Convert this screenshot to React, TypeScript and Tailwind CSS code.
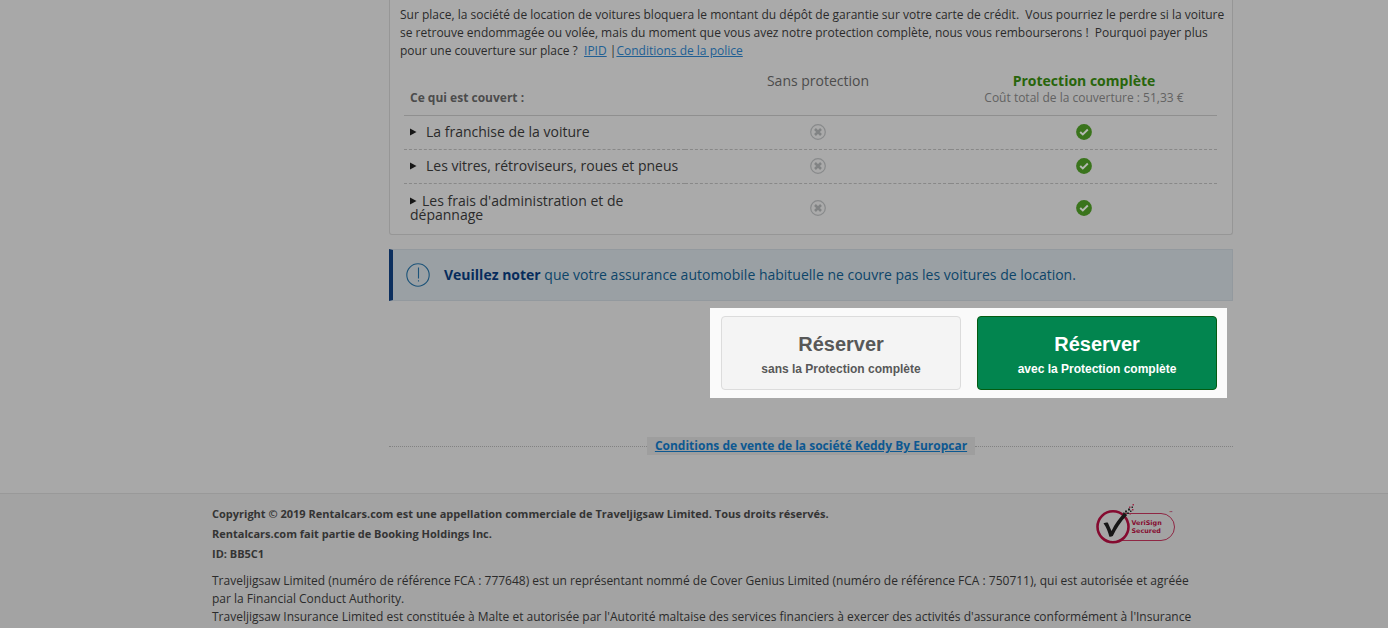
import React from "react";

const coverage = [
  { label: "La franchise de la voiture", wrap: false },
  { label: "Les vitres, rétroviseurs, roues et pneus", wrap: false },
  { label: "Les frais d'administration et de dépannage", wrap: true },
];

function NotCovered() {
  return (
    <svg className="mx-auto block" width="16" height="16" viewBox="0 0 16 16" role="img" aria-label="Non couvert">
      <circle cx="8" cy="8" r="7.3" fill="none" stroke="#888a8b" strokeWidth="1.2" />
      <path d="M5 5l6 6M11 5l-6 6" stroke="#818384" strokeWidth="2.5" />
    </svg>
  );
}

function Covered() {
  return (
    <svg className="mx-auto block" width="16" height="16" viewBox="0 0 16 16" role="img" aria-label="Couvert">
      <circle cx="8" cy="8" r="7.9" fill="#3a741c" />
      <path d="M4.200 8l2.600 2.500 5-5" fill="none" stroke="#b5b9b2" strokeWidth="1.9" />
    </svg>
  );
}

function Notice() {
  return (
    <div className="mt-[14px] flex items-center gap-[14px] border border-l-4 border-[#93999e] border-l-[#0c2f5e] bg-[#9aa0a4] py-[13px] pl-[13px] pr-4 text-sm leading-[22px] text-[#0d4569]">
      <svg className="size-6 shrink-0" viewBox="0 0 24 24" fill="none" stroke="#1c5379" aria-hidden="true">
        <circle cx="12" cy="12" r="11.2" strokeWidth="1.1" />
        <path d="M12.5 4.5v11M12.5 17.2v1.4" strokeWidth="1.1" />
      </svg>
      <p>
        <strong className="font-bold text-[#062c5c]">Veuillez noter</strong> que votre assurance automobile habituelle ne
        couvre pas les voitures de location.
      </p>
    </div>
  );
}

function VeriSign() {
  return (
    <svg className="shrink-0" width="82" height="40" viewBox="0 0 82 40" role="img" aria-label="VeriSign Secured">
      <path d="M29 9.500H66a13.500 13.500 0 0 1 0 27H27" fill="none" stroke="#8f2744" strokeWidth="1" />
      <circle cx="18" cy="22.800" r="15.500" fill="#a6a6a6" stroke="#850b30" strokeWidth="2.600" />
      <path d="M8.500 19.200c2-.9 3.800-1.100 4.400-.4l3.600 8.100c3.500-7.300 7.500-12.700 12.700-18.200l3 2.200c-6.500 6.800-10.800 13.500-14.400 21.200-1.200.7-2.300.9-3.400.7-1.300-5.300-3.100-9.700-5.900-13.600z" fill="#171717" />
      <path d="M30 6.500h2v2h-2zM33 4.500h2v2h-2zM32 8.500h2v1.500h-2zM35 6.500h1.500V8H35zM36.500 2.500H38V4h-1.500zM28 8.500h1.500V10H28z" fill="#222" />
      <path d="M34 2.500h1.500V4H34zM37 5h1.500v1.500H37zM34.500 9h1.500v1.500h-1.500zM37.500 0H39v1.500h-1.500z" fill="#9d2947" />
      <g fill="#850b30" fontFamily="'DejaVu Sans', sans-serif" fontSize="6.4" fontWeight="700">
        <text x="36.500" y="21">VeriSign</text>
        <text x="36.500" y="29">Secured</text>
        <text x="74" y="10" fontSize="4">™</text>
      </g>
    </svg>
  );
}

function BookingBar() {
  return (
    <div className="mr-[6px] mt-[7px] flex gap-4 self-end bg-[#fafafa] pb-2 pl-[11px] pr-[10px] pt-2 font-['Liberation_Sans',Arial,sans-serif] font-bold">
      <button type="button" className="flex w-60 flex-col items-center rounded-[4px] border border-[#dcdcdc] bg-[#f4f4f4] pb-2 pt-[14px] text-[#585858]">
        <span className="text-xl leading-[26px]">Réserver</span>
        <span className="text-xs leading-6">sans la Protection complète</span>
      </button>
      <button type="button" className="flex w-60 flex-col items-center rounded-[4px] border border-[#045c12] bg-[#02854f] pb-2 pt-[14px] text-white">
        <span className="text-xl leading-[26px]">Réserver</span>
        <span className="text-xs leading-6">avec la Protection complète</span>
      </button>
    </div>
  );
}

export default function App() {
  return (
    <div className="flex min-h-screen flex-col bg-[#a8a8a8] font-['Open_Sans','Noto_Sans',sans-serif] text-xs text-[#2b2b2b]">
      <main className="mx-auto flex w-full max-w-[1078px] flex-col pl-[234px]">
        <section className="rounded-b-[3px] border border-t-0 border-[#969696] bg-[#aaaaaa] pb-px pl-[10px] pt-[6px]">
          <p className="leading-[18px]">
            Sur place, la société de location de voitures bloquera le montant du dépôt de garantie sur votre carte de
            crédit.&nbsp; Vous pourriez le perdre si la voiture
            <br />
            se retrouve endommagée ou volée, mais du moment que vous avez notre protection complète, nous vous
            rembourserons !&nbsp; Pourquoi payer plus
            <br />
            pour une couverture sur place ?&nbsp;{" "}
            <a href="#ipid" className="text-[#215f94] underline">IPID</a> |
            <a href="#police" className="text-[#215f94] underline">Conditions de la police</a>
          </p>
          <div className="pl-1 pr-[15px] pt-[6px]">
            <table className="w-full table-fixed border-collapse text-sm leading-[14px]">
              <colgroup>
                <col />
                <col className="w-[266px]" />
                <col className="w-[266px]" />
              </colgroup>
              <thead>
                <tr className="h-[49px] border-b border-[#8f8f8f] align-top text-[#4c4c4c]">
                  <th scope="col" className="pl-[6px] pt-6 text-left text-xs leading-4 font-bold">
                    Ce qui est couvert :
                  </th>
                  <th scope="col" className="pt-[6px] leading-[18px] font-normal">Sans protection</th>
                  <th scope="col" className="pt-[6px] font-normal">
                    <div className="leading-[18px] font-bold text-[#28650b]">Protection complète</div>
                    <div className="text-xs leading-4 text-[#626262]">Coût total de la couverture : 51,33 €</div>
                  </th>
                </tr>
              </thead>
              <tbody>
                {coverage.map((row) => (
                  <tr
                    key={row.label}
                    className={row.wrap ? "h-[50px]" : "h-[34px] border-b border-dashed border-[#888888]"}
                  >
                    <th scope="row" className="pl-[6px] pr-[60px] text-left font-normal">
                      <div className={row.wrap ? "" : "-mr-[60px]"}>
                        <svg
                          className={row.wrap ? "mr-[5px] inline-block align-baseline" : "mr-[9px] inline-block align-baseline"}
                          width="7"
                          height="9"
                          viewBox="0 0 7 9"
                          aria-hidden="true"
                        >
                          <path d="M0 .5l6.500 3.500L0 7.500z" fill="#171717" />
                        </svg>
                        {row.label}
                      </div>
                    </th>
                    <td><NotCovered /></td>
                    <td><Covered /></td>
                  </tr>
                ))}
              </tbody>
            </table>
          </div>
        </section>
        <Notice />
        <BookingBar />
        <div className="mb-[38px] mt-[39px] flex items-center">
          <span className="flex-1 border-t border-dotted border-[#828282]" />
          <a href="#conditions" className="bg-[#9e9e9e] px-2 leading-[18px] font-bold text-[#0d5891] underline">
            Conditions de vente de la société Keddy By Europcar
          </a>
          <span className="flex-1 border-t border-dotted border-[#828282]" />
        </div>
      </main>
      <footer className="flex-1 border-t border-[#999999] bg-[#a3a3a3] pt-[10px]">
        <div className="mx-auto w-full max-w-[1078px] pl-[57px]">
          <div className="flex justify-between pr-14">
            <div className="text-[11px] leading-5 font-bold text-[#343434]">
              <p>Copyright © 2019 Rentalcars.com est une appellation commerciale de Traveljigsaw Limited. Tous droits réservés.</p>
              <p>Rentalcars.com fait partie de Booking Holdings Inc.</p>
              <p>ID: BB5C1</p>
            </div>
            <VeriSign />
          </div>
          <div className="mt-2 leading-[18px]">
            <p>
              Traveljigsaw Limited (numéro de référence FCA : 777648) est un représentant nommé de Cover Genius Limited
              (numéro de référence FCA : 750711), qui est autorisée et agréée
              <br />
              par la Financial Conduct Authority.
            </p>
            <p>
              Traveljigsaw Insurance Limited est constituée à Malte et autorisée par l'Autorité maltaise des services
              financiers à exercer des activités d'assurance conformément à l'Insurance
            </p>
          </div>
        </div>
      </footer>
    </div>
  );
}
